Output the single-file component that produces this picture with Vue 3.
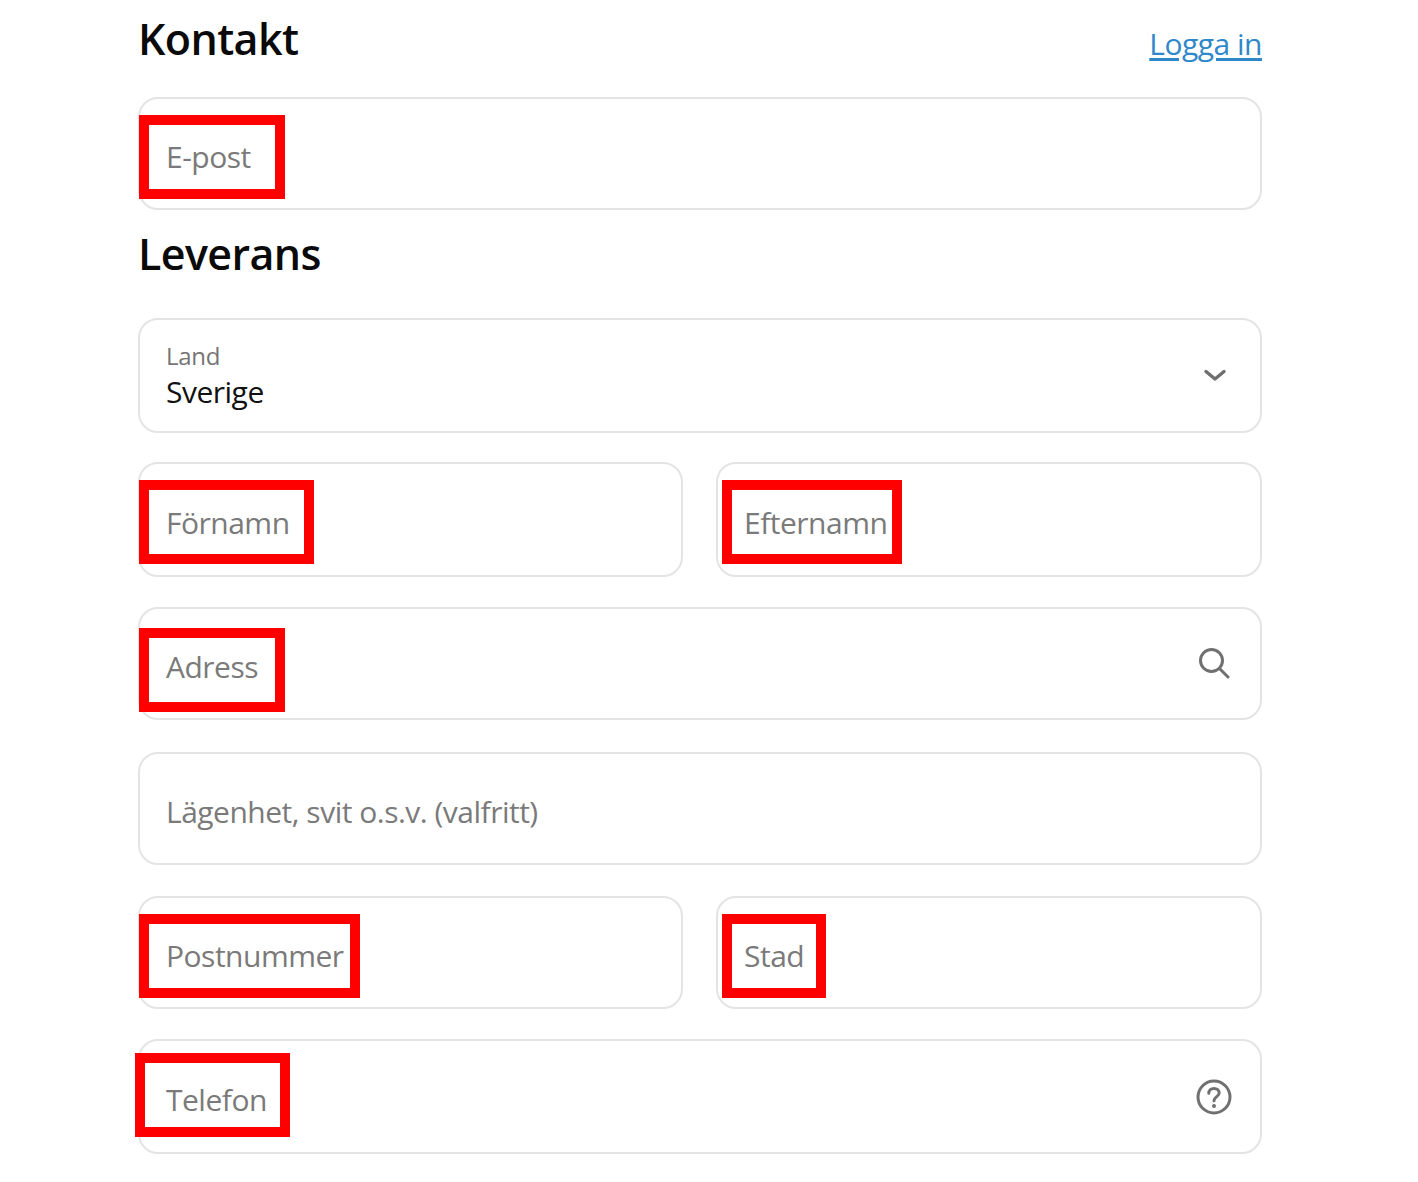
<template>
  <div class="checkout">
    <div class="section-head">
      <h2>Kontakt</h2>
      <a href="#" class="login-link">Logga in</a>
    </div>
    <div class="field h113">
      <span class="placeholder">E-post</span>
      <span class="mark mark-epost"></span>
    </div>

    <h2 class="delivery-title">Leverans</h2>

    <div class="field select h115">
      <div class="select-value">
        <span class="select-label">Land</span>
        <span class="select-text">Sverige</span>
      </div>
      <svg class="icon chevron" viewBox="0 0 24 24" fill="none">
        <path d="M3 7.5 L12 15 L21 7.5" stroke="#6e6e6e" stroke-width="3.4" stroke-linecap="round" stroke-linejoin="round" />
      </svg>
    </div>

    <div class="field-row first-row">
      <div class="field h115">
        <span class="placeholder">Förnamn</span>
        <span class="mark mark-fornamn"></span>
      </div>
      <div class="field h115">
        <span class="placeholder">Efternamn</span>
        <span class="mark mark-efternamn"></span>
      </div>
    </div>

    <div class="field h113 gap-30">
      <span class="placeholder">Adress</span>
      <span class="mark mark-adress"></span>
      <svg class="icon search" viewBox="0 0 32 32" fill="none">
        <circle cx="13.5" cy="13.5" r="11" stroke="#707070" stroke-width="3" />
        <path d="M21.5 21.5 L30 30" stroke="#707070" stroke-width="3" stroke-linecap="round" />
      </svg>
    </div>

    <div class="field h113 gap-32">
      <span class="placeholder">Lägenhet, svit o.s.v. (valfritt)</span>
    </div>

    <div class="field-row gap-31">
      <div class="field h113">
        <span class="placeholder">Postnummer</span>
        <span class="mark mark-postnummer"></span>
      </div>
      <div class="field h113">
        <span class="placeholder">Stad</span>
        <span class="mark mark-stad"></span>
      </div>
    </div>

    <div class="field h115 gap-30">
      <span class="placeholder">Telefon</span>
      <span class="mark mark-telefon"></span>
      <svg class="icon help" viewBox="0 0 36 36" fill="none">
        <circle cx="18" cy="18" r="16" stroke="#707070" stroke-width="3" />
        <path d="M12.8 14.2 C12.8 11 15.2 9.4 18 9.4 C20.9 9.4 23.2 11.2 23.2 14 C23.2 17.6 18 17.8 18 21.8" stroke="#707070" stroke-width="3" stroke-linecap="round" />
        <circle cx="18" cy="27" r="2" fill="#707070" />
      </svg>
    </div>
  </div>
</template>

<script setup>
</script>

<style>
body {
  background: #fff;
}
</style>

<style scoped>
.checkout {
  width: 1124px;
  margin-left: 138px;
  font-family: "Open Sans", "Noto Sans", sans-serif;
}

.section-head {
  display: flex;
  justify-content: space-between;
  align-items: flex-start;
  height: 97px;
}

h2 {
  margin: 0;
  font-size: 43px;
  line-height: 56px;
  font-weight: 600;
  color: #0a0a0a;
  letter-spacing: -0.6px;
  padding-top: 11px;
}

.login-link {
  margin-top: 22px;
  font-size: 30px;
  line-height: 44px;
  color: #2f88c9;
  letter-spacing: -0.5px;
  text-underline-offset: 3px;
}

.field {
  position: relative;
  box-sizing: border-box;
  display: flex;
  align-items: center;
  padding: 0 26px;
  border: 2px solid #e4e4e4;
  border-radius: 20px;
  background: #fff;
}

.h113 {
  height: 113px;
}

.h115 {
  height: 115px;
}

.placeholder {
  font-size: 30px;
  line-height: 40px;
  color: #7a7a7a;
  letter-spacing: -0.5px;
  margin-top: 6px;
}

.delivery-title {
  height: 108px;
  box-sizing: border-box;
  padding-top: 16px;
}

.select {
  justify-content: space-between;
}

.select-value {
  display: flex;
  flex-direction: column;
}

.select-label {
  font-size: 24px;
  line-height: 32px;
  color: #757575;
  letter-spacing: -0.3px;
}

.select-text {
  font-size: 30px;
  line-height: 40px;
  color: #111;
  letter-spacing: -0.5px;
}

.field-row {
  display: grid;
  grid-template-columns: 545px 546px;
  gap: 33px;
}

.first-row {
  margin-top: 29px;
}

.gap-30 {
  margin-top: 30px;
}

.gap-31 {
  margin-top: 31px;
}

.gap-32 {
  margin-top: 32px;
}

.icon {
  position: absolute;
  display: block;
}

.chevron {
  right: 33px;
  top: 44px;
  width: 24px;
  height: 24px;
}

.search {
  right: 30px;
  top: 38px;
  width: 32px;
  height: 32px;
}

.help {
  right: 28px;
  top: 38px;
  width: 36px;
  height: 36px;
}

.mark {
  position: absolute;
  box-sizing: border-box;
  border: 10px solid #ff0000;
  height: 84px;
  left: -1px;
  top: 16px;
  pointer-events: none;
}

.mark-epost {
  width: 146px;
}

.mark-fornamn {
  width: 175px;
}

.mark-efternamn {
  width: 180px;
  left: 4px;
}

.mark-adress {
  width: 146px;
  top: 19px;
}

.mark-postnummer {
  width: 221px;
}

.mark-stad {
  width: 104px;
  left: 4px;
}

.mark-telefon {
  width: 155px;
  left: -5px;
  top: 12px;
}
</style>
